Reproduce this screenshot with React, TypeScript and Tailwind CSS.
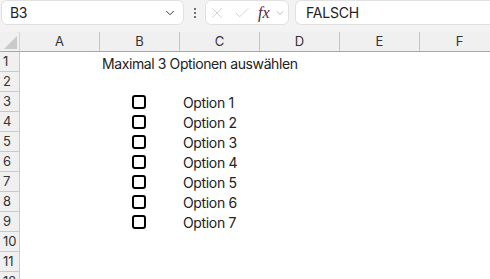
import { ChevronDown, X, Check } from 'lucide-react';

const COLS = ['A', 'B', 'C', 'D', 'E', 'F'];
const ROWS = [1, 2, 3, 4, 5, 6, 7, 8, 9, 10, 11, 12];

export default function App() {
  return (
    <div className="w-[490px] h-[279px] overflow-hidden bg-white text-[#222] font-['Inter',sans-serif]">
      {/* Name box + formula bar */}
      <div className="h-[32px] bg-[#f3f3f3] flex items-start">
        <div className="ml-[1px] w-[183px] h-[25px] shrink-0 bg-white border border-[#e1e1e1] rounded-[6px] flex items-center justify-between pl-[8px] pr-[6px]">
          <span className="text-[14px] tracking-[-0.3px]">B3</span>
          <ChevronDown size={14} strokeWidth={1.6} className="text-[#333]" />
        </div>
        <div className="w-[21px] h-[25px] shrink-0 flex flex-col items-center justify-center gap-[2px]">
          <span className="w-[2px] h-[2px] bg-[#444] rounded-full" />
          <span className="w-[2px] h-[2px] bg-[#444] rounded-full" />
          <span className="w-[2px] h-[2px] bg-[#444] rounded-full" />
        </div>
        <div className="w-[84px] h-[25px] shrink-0 bg-white border border-[#e1e1e1] rounded-[6px] flex items-center pl-[2px] pr-[2px]">
          <X size={18} strokeWidth={1} className="text-[#c4c4c4]" />
          <Check size={18} strokeWidth={1} className="text-[#c4c4c4] ml-[7px]" />
          <span className="ml-[7px] text-[16px] italic font-['Liberation_Serif',serif] text-[#4a2742] leading-none">fx</span>
          <ChevronDown size={12} strokeWidth={1.4} className="text-[#999] ml-[4px]" />
        </div>
        <div className="ml-[6px] flex-1 h-[25px] bg-white border border-[#e1e1e1] border-r-0 rounded-l-[6px] flex items-center pl-[10px]">
          <span className="text-[14px] tracking-[-0.2px]">FALSCH</span>
        </div>
      </div>

      {/* Column headers */}
      <div className="flex h-[20px] bg-[#f0f0f0] border-b border-[#a8a8a8]">
        <div className="w-[20px] shrink-0 flex items-end justify-end pr-[2px] pb-[2px] border-r border-[#d4d4d4]">
          <svg width="13" height="13" viewBox="0 0 13 13">
            <polygon points="13,0 13,13 0,13" fill="#c9c9c9" />
          </svg>
        </div>
        {COLS.map(c => (
          <div key={c} className="w-[80px] shrink-0 flex items-center justify-center border-r border-[#c6c6c6] text-[13px] text-[#333]">
            {c}
          </div>
        ))}
      </div>

      {/* Rows */}
      {ROWS.map(r => (
        <div key={r} className="flex h-[20px]">
          <div className="w-[20px] shrink-0 bg-[#f0f0f0] border-r border-b border-[#c9c9c9] flex items-center pl-[3px] text-[13px] text-[#333]">
            {r}
          </div>
          <div className="w-[80px] shrink-0" />
          <div className="w-[80px] shrink-0 relative flex items-center">
            {r === 1 && (
              <span className="absolute left-[2px] top-[1px] whitespace-nowrap text-[14px] tracking-[-0.4px]">Maximal 3 Optionen auswählen</span>
            )}
            {r >= 3 && r <= 9 && (
              <span className="ml-[32px] w-[14px] h-[14px] border-2 border-black rounded-[3px]" />
            )}
          </div>
          <div className="w-[80px] shrink-0 flex items-center pl-[3px]">
            {r >= 3 && r <= 9 && (
              <span className="text-[14px] tracking-[-0.35px] whitespace-nowrap">Option {r - 2}</span>
            )}
          </div>
          <div className="w-[80px] shrink-0" />
          <div className="w-[80px] shrink-0" />
          <div className="w-[80px] shrink-0" />
        </div>
      ))}
    </div>
  );
}
